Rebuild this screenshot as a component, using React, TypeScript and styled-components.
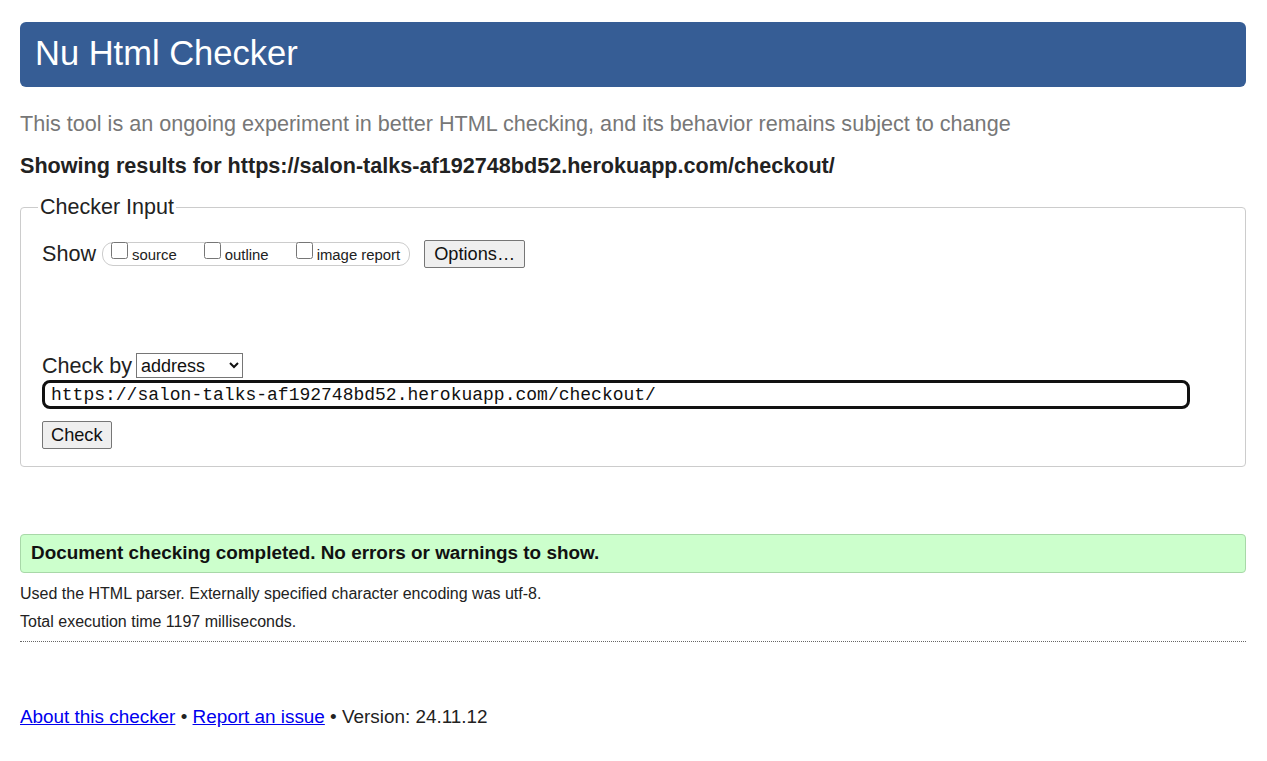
import React from "react";
import styled, { createGlobalStyle } from "styled-components";

const Global = createGlobalStyle`
  html, body { margin: 0; padding: 0; background: #fff; }
  body { font-family: "Liberation Sans", Arial, sans-serif; color: #222; }
`;

const Page = styled.div`
  padding: 22px 21px 30px 20px;
`;

const Header = styled.h1`
  margin: 0;
  height: 65px;
  line-height: 63px;
  padding: 0 15px;
  background: #365d95;
  color: #fff;
  font-weight: normal;
  font-size: 34.5px;
  border-radius: 6px;
`;

const Intro = styled.p`
  margin: 25px 0 0;
  font-size: 21.6px;
  line-height: 24px;
  color: #777;
`;

const Showing = styled.h2`
  margin: 18px 0 0;
  font-size: 21.6px;
  line-height: 24px;
  font-weight: bold;
  color: #222;
`;

const Fieldset = styled.fieldset`
  margin: 17px 0 0;
  padding: 0 21px 17px;
  border: 1px solid #ccc;
  border-radius: 4px;
  min-width: 0;
`;

const Legend = styled.legend`
  font-size: 21.5px;
  line-height: 24px;
  padding: 0 2px;
  margin-left: -4px;
  color: #222;
`;

const Row = styled.div<{ $mt: number }>`
  display: flex;
  align-items: center;
  margin-top: ${(p) => p.$mt}px;
`;

const BigLabel = styled.span`
  font-size: 21.6px;
  line-height: 24px;
`;

const Pill = styled.div`
  display: flex;
  align-items: flex-start;
  height: 24px;
  box-sizing: border-box;
  margin-left: 6px;
  padding: 0 9px 0 8px;
  border: 1px solid #ccc;
  border-radius: 11px;
`;

const CheckLabel = styled.label<{ $last?: boolean }>`
  display: flex;
  align-items: flex-start;
  font-size: 14.9px;
  line-height: 20px;
  margin-right: ${(p) => (p.$last ? 0 : 27)}px;
  span { margin-top: 2px; }
  input {
    margin: -1px 4px 0 0;
    width: 17px;
    height: 17px;
  }
`;

const Button = styled.button<{ $ml?: number }>`
  font-family: "Liberation Sans", Arial, sans-serif;
  font-size: 18.2px;
  height: 28px;
  padding: 0 9px;
  margin-left: ${(p) => p.$ml ?? 0}px;
  color: #111;
  background: #efefef;
  border: 1px solid #767676;
  border-radius: 2px;
`;

const CheckButton = styled(Button)`
  padding: 0 8px;
`;

const Select = styled.select`
  font-family: "Liberation Sans", Arial, sans-serif;
  font-size: 18px;
  width: 107px;
  height: 25px;
  margin-left: 4px;
  color: #111;
  border: 1px solid #767676;
  border-radius: 0;
  background: #fff;
`;

const UrlInput = styled.input`
  display: block;
  box-sizing: border-box;
  width: 1148px;
  height: 29px;
  margin-top: 2px;
  padding: 0 6px;
  font-family: "Liberation Mono", "Courier New", monospace;
  font-size: 18px;
  color: #111;
  border: 3px solid #111;
  border-radius: 8px;
  outline: none;
`;

const Success = styled.div`
  margin-top: 67px;
  height: 39px;
  box-sizing: border-box;
  padding: 0 10px;
  line-height: 35px;
  font-size: 18.9px;
  font-weight: bold;
  color: #111;
  background: #ccffcc;
  border: 1px solid #a8d8a8;
  border-radius: 4px;
`;

const Detail = styled.p<{ $mt: number }>`
  margin: ${(p) => p.$mt}px 0 0;
  font-size: 16px;
  line-height: 18px;
  color: #222;
`;

const Rule = styled.hr`
  margin: 10px 0 0;
  border: 0;
  border-top: 1px dotted #666;
  height: 0;
`;

const Footer = styled.p`
  margin: 64px 0 0;
  font-size: 18.9px;
  line-height: 22px;
  color: #222;
  a { color: #0000ee; text-decoration: underline; }
`;

export default function App() {
  const url = "https://salon-talks-af192748bd52.herokuapp.com/checkout/";
  return (
    <Page>
      <Global />
      <Header>Nu Html Checker</Header>
      <Intro>
        This tool is an ongoing experiment in better HTML checking, and its behavior remains subject to change
      </Intro>
      <Showing>Showing results for {url}</Showing>
      <Fieldset>
        <Legend>Checker Input</Legend>
        <Row $mt={21}>
          <BigLabel>Show</BigLabel>
          <Pill>
            <CheckLabel>
              <input type="checkbox" />
              <span>source</span>
            </CheckLabel>
            <CheckLabel>
              <input type="checkbox" />
              <span>outline</span>
            </CheckLabel>
            <CheckLabel $last>
              <input type="checkbox" />
              <span>image report</span>
            </CheckLabel>
          </Pill>
          <Button $ml={14}>Options…</Button>
        </Row>
        <Row $mt={85}>
          <BigLabel>Check by</BigLabel>
          <Select defaultValue="address">
            <option value="address">address</option>
            <option value="file">file upload</option>
            <option value="text">text input</option>
          </Select>
        </Row>
        <UrlInput defaultValue={url} />
        <Row $mt={12}>
          <CheckButton>Check</CheckButton>
        </Row>
      </Fieldset>
      <Success>Document checking completed. No errors or warnings to show.</Success>
      <Detail $mt={12}>Used the HTML parser. Externally specified character encoding was utf-8.</Detail>
      <Detail $mt={10}>Total execution time 1197 milliseconds.</Detail>
      <Rule />
      <Footer>
        <a href="#about">About this checker</a> • <a href="#issue">Report an issue</a> • Version: 24.11.12
      </Footer>
    </Page>
  );
}
